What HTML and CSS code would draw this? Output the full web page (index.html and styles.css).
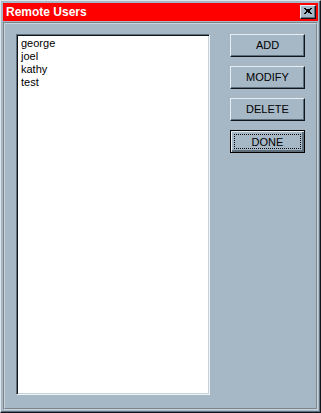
FILE: index.html
```html
<!DOCTYPE html>
<html>
<head>
<meta charset="utf-8">
<link rel="stylesheet" href="styles.css">
</head>
<body>
<div class="window">
  <div class="titlebar">
    <span class="title">Remote Users</span>
    <span class="close">
      <svg width="8" height="7" viewBox="0 0 8 7"><path d="M0 0 L7 6 M1 0 L8 6 M7 0 L0 6 M8 0 L1 6" stroke="#000" stroke-width="1" fill="none" shape-rendering="crispEdges"/></svg>
    </span>
  </div>
  <div class="panel">
    <div class="listbox">
      <div class="item">george</div>
      <div class="item">joel</div>
      <div class="item">kathy</div>
      <div class="item">test</div>
    </div>
    <div class="buttons">
      <div class="btn"><span>ADD</span></div>
      <div class="btn"><span>MODIFY</span></div>
      <div class="btn"><span>DELETE</span></div>
      <div class="btn default"><span class="focus">DONE</span></div>
    </div>
  </div>
</div>
</body>
</html>
```

FILE: styles.css
```css
html, body {
  margin: 0;
  padding: 0;
  background: #a6b7c6;
}

.window {
  width: 321px;
  height: 413px;
  box-sizing: border-box;
  border: 1px solid;
  border-color: #dfe7ee #10161c #10161c #dfe7ee;
  box-shadow: inset -1px -1px 0 #5f6e7b;
  padding: 2px;
  display: flex;
  flex-direction: column;
  background: #a6b7c6;
  font-family: "Liberation Sans", Arial, sans-serif;
}

.titlebar {
  height: 18px;
  flex: none;
  background: #ff0000;
  display: flex;
  align-items: center;
  justify-content: space-between;
  padding: 0 2px 0 3px;
}

.title {
  color: #ffffff;
  font-weight: bold;
  font-size: 12px;
}

.close {
  width: 16px;
  height: 14px;
  box-sizing: border-box;
  background: #a6b7c6;
  border: 1px solid;
  border-color: #e6eef4 #10161c #10161c #e6eef4;
  box-shadow: inset -1px -1px 0 #5f6e7b;
  display: flex;
  align-items: center;
  justify-content: center;
}

.close svg {
  display: block;
  margin: 0 1px 1px 0;
}

.panel {
  flex: 1;
  margin-top: 1px;
  border: 2px groove #c8d4de;
  display: flex;
  padding: 10px 11px 13px 11px;
  gap: 20px;
}

.listbox {
  width: 195px;
  box-sizing: border-box;
  background: #ffffff;
  border: 1px solid;
  border-color: #5f6e7b #eef3f6 #eef3f6 #5f6e7b;
  box-shadow: inset 1px 1px 0 #10161c, inset -1px -1px 0 #c6d2dc;
  padding: 2px 4px;
}

.item {
  font-size: 11px;
  line-height: 13px;
  color: #000;
}

.buttons {
  display: flex;
  flex-direction: column;
  gap: 9px;
  align-self: flex-start;
}

.btn {
  width: 75px;
  height: 23px;
  box-sizing: border-box;
  border: 1px solid;
  border-color: #e6eef4 #10161c #10161c #e6eef4;
  box-shadow: inset -1px -1px 0 #5f6e7b;
  display: flex;
  align-items: center;
  justify-content: center;
  font-size: 11px;
  color: #000;
  padding-bottom: 1px;
}

.btn.default {
  border: 1px solid #000;
  box-shadow: inset 1px 1px 0 #e6eef4, inset -2px -2px 0 #5f6e7b;
  padding: 3px;
}

.focus {
  flex: 1;
  align-self: stretch;
  border: 1px dotted #000;
  display: flex;
  align-items: center;
  justify-content: center;
}
```
